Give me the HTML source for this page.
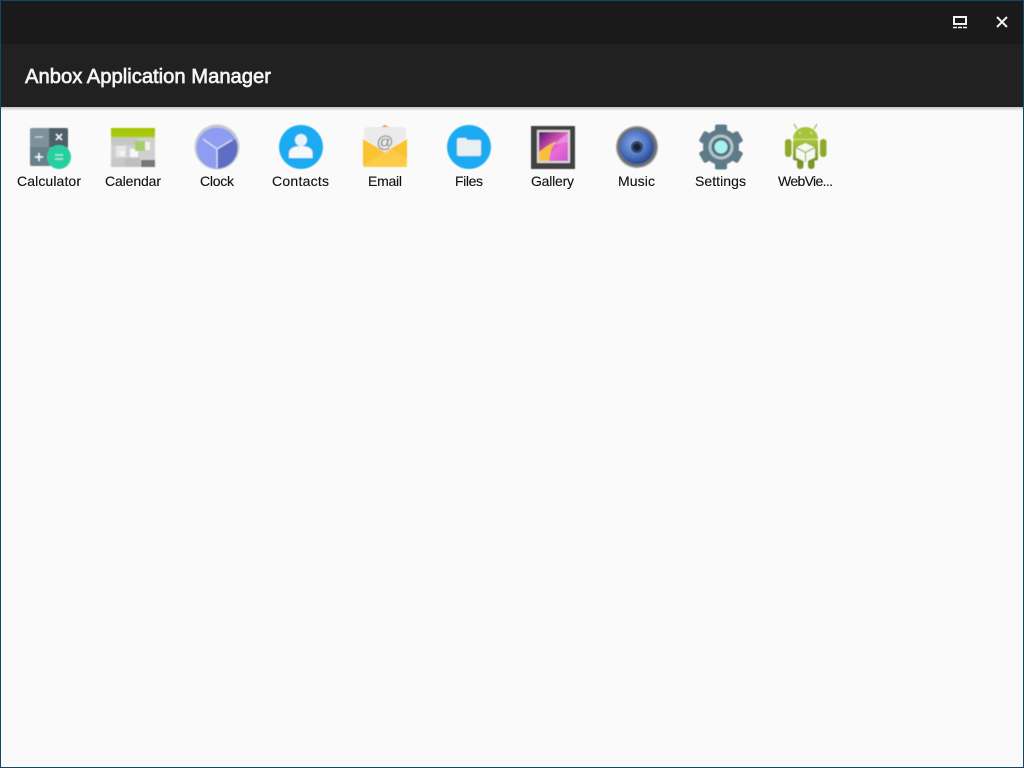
<!DOCTYPE html>
<html>
<head>
<meta charset="utf-8">
<style>
html,body{margin:0;padding:0;width:1024px;height:768px;overflow:hidden;background:#fafafa;}
svg{position:absolute;left:0;top:0;display:block;}
text{font-family:"Liberation Sans",sans-serif;}
.l{font-size:14px;fill:#111;stroke:#111;stroke-width:.12;text-anchor:middle;}
</style>
</head>
<body>
<svg width="1024" height="768" viewBox="0 0 1024 768" xmlns="http://www.w3.org/2000/svg">
<defs>
<linearGradient id="shadow" x1="0" y1="0" x2="0" y2="1"><stop offset="0" stop-color="#c4c4c4"/><stop offset="1" stop-color="#fafafa"/></linearGradient>
<linearGradient id="pic" x1="0" y1="0" x2="1" y2="1"><stop offset="0" stop-color="#4f1a70"/><stop offset=".3" stop-color="#b03f9c"/><stop offset=".6" stop-color="#ec6cd4"/><stop offset="1" stop-color="#c856d0"/></linearGradient>
<radialGradient id="spk" cx=".42" cy=".4" r=".62"><stop offset="0" stop-color="#8aa8e6"/><stop offset=".6" stop-color="#4f76c4"/><stop offset="1" stop-color="#26468e"/></radialGradient>
<linearGradient id="droid" x1="0" y1="0" x2="0" y2="1"><stop offset="0" stop-color="#a9c63c"/><stop offset="1" stop-color="#7a9626"/></linearGradient>
<linearGradient id="green" x1="0" y1="0" x2="0" y2="1"><stop offset="0" stop-color="#a4c400"/><stop offset=".8" stop-color="#a8ca10"/><stop offset="1" stop-color="#c4d68a"/></linearGradient>
<filter id="b" x="-2%" y="-20%" width="104%" height="140%"><feGaussianBlur stdDeviation=".55"/></filter>
</defs>
<rect width="1024" height="768" fill="#fafafa"/>
<rect x="0" y="107" width="1024" height="4" fill="url(#shadow)"/>
<rect width="1024" height="44" fill="#1a1a1a"/>
<rect y="44" width="1024" height="63" fill="#212121"/>
<rect x=".5" y=".5" width="1023" height="767" fill="none" stroke="#0f4a63" stroke-width="1"/>
<text x="25" y="83" font-size="20" fill="#f5f5f5" stroke="#f5f5f5" stroke-width=".65" textLength="246" lengthAdjust="spacingAndGlyphs">Anbox Application Manager</text>
<g fill="none" stroke="#f2f2f2">
<rect x="954" y="17" width="12" height="7" stroke-width="2"/>
<path d="M953 27.500h14" stroke-width="1.400" stroke-dasharray="4 1"/>
<path d="M997 17l10 10M1007 17l-10 10" stroke-width="2"/>
</g>
<g filter="url(#b)">
<!-- calculator -->
<rect x="30" y="128" width="38" height="38" rx="2" fill="#7f929c"/>
<path d="M49 128h17a2 2 0 0 1 2 2v17h-19z" fill="#4f6068"/>
<path d="M30 147h19v19H32a2 2 0 0 1-2-2z" fill="#66808c"/>
<path d="M35 137h8" stroke="#c2ced3" stroke-width="1.500"/>
<path d="M56 134l6 6M62 134l-6 6" stroke="#fff" stroke-width="1.400"/>
<path d="M35 157h8M39 153v8" stroke="#fff" stroke-width="1.400"/>
<circle cx="59" cy="157" r="12" fill="#26cfa0"/>
<path d="M55 155h8M55 159h8" stroke="#a5eed8" stroke-width="1.500"/>
<!-- calendar -->
<rect x="111" y="128" width="44" height="39" fill="#d0d0d0"/>
<rect x="111" y="128" width="44" height="10" fill="url(#green)"/>
<rect x="111" y="138" width="28" height="7" fill="#c6c6c6"/>
<rect x="116" y="146" width="10" height="11" fill="#e6e6e6"/>
<rect x="120" y="151" width="5" height="5" fill="#f4f4f4"/>
<rect x="130" y="149" width="8" height="8" fill="#f8f8f8"/>
<rect x="135" y="141" width="10" height="10" fill="#a4cf6a"/>
<rect x="145" y="142" width="5" height="8" fill="#f2f2f2"/>
<rect x="141" y="160" width="14" height="7" fill="#777"/>
<path d="M125 158h15v9h-15z" fill="#c0c0c0"/>
<path d="M111 158h14v9h-14z" fill="#c8c8c8"/>
<!-- clock -->
<circle cx="217" cy="147" r="22.500" fill="#c6c9d2"/>
<circle cx="217" cy="148" r="20.500" fill="#8e9df2"/>
<path d="M217 149l18.500-10a20.500 20.500 0 0 1-18.500 29.500z" fill="#5f6ec4"/>
<path d="M203 139l14 10 15-9M217 149v19" fill="none" stroke="#d4d9f2" stroke-width="1.500"/>
<!-- contacts -->
<circle cx="301" cy="147" r="22" fill="#1eaaf1"/>
<circle cx="301" cy="140" r="6" fill="#e8f4fb"/>
<path d="M289 158v-5c0-5 6-7 12-7s11.500 2 11.500 7v5z" fill="#f4f8fb"/>
<!-- email -->
<path d="M385 125l6 3h-12z" fill="#f08a24"/>
<path d="M363 139l22 13 22-13v26a2 2 0 0 1-2 2h-40a2 2 0 0 1-2-2z" fill="#fbc232"/>
<path d="M364 131a4 4 0 0 1 4-4h34a4 4 0 0 1 4 4v7l-21 15-21-15z" fill="#ebebeb"/>
<path d="M363 165l28-16 16 9v7a2 2 0 0 1-2 2h-40a2 2 0 0 1-2-2z" fill="#fccc48"/>
<path d="M391 149l16-10v19z" fill="#fbc232"/>
<text x="385" y="147.500" font-size="17" fill="#808080" text-anchor="middle">@</text>
<!-- files -->
<circle cx="469" cy="147" r="22" fill="#1eaaf1"/>
<path d="M457 140a2 2 0 0 1 2-2h7l1.500 2h11.500a2 2 0 0 1 2 2v12a2 2 0 0 1-2 2h-20a2 2 0 0 1-2-2z" fill="#e8eff3"/>
<!-- gallery -->
<rect x="531" y="126" width="44" height="43" fill="#434343"/>
<rect x="537" y="130" width="33" height="33" fill="#d9d9d9"/>
<rect x="539" y="132" width="29" height="29" fill="url(#pic)"/>
<path d="M539 161v-9l8-6 9-5-5 9-2 11z" fill="#f6bf3c"/>
<path d="M568 133l-15 12 15-3z" fill="#e98be0"/>
<!-- music -->
<circle cx="637" cy="147" r="21" fill="#6a6e73"/>
<circle cx="637" cy="147" r="20.300" fill="none" stroke="#a4a6aa" stroke-width="1"/>
<circle cx="637" cy="147" r="17" fill="url(#spk)"/>
<circle cx="637" cy="147" r="6" fill="#33466a"/>
<circle cx="637" cy="147" r="3.500" fill="#18233a"/>
<!-- settings -->
<g transform="translate(721 147)" fill="#5f7a88">
<circle r="18"/>
<rect x="-6" y="-22.500" width="12" height="10" rx="2"/>
<rect x="-6" y="-22.500" width="12" height="10" rx="2" transform="rotate(60)"/>
<rect x="-6" y="-22.500" width="12" height="10" rx="2" transform="rotate(120)"/>
<rect x="-6" y="-22.500" width="12" height="10" rx="2" transform="rotate(180)"/>
<rect x="-6" y="-22.500" width="12" height="10" rx="2" transform="rotate(240)"/>
<rect x="-6" y="-22.500" width="12" height="10" rx="2" transform="rotate(300)"/>
<circle r="12.500" fill="#b3c4cb"/>
<circle r="9.500" fill="#546e7a"/>
<circle r="6.500" fill="#a5f2ee"/>
</g>
<!-- webview -->
<path d="M797 129l-3-5M814 129l3-5" stroke="#a7b86a" stroke-width="1.300"/>
<path d="M793 139a12.500 12 0 0 1 25 0z" fill="#a6c53a"/>
<rect x="793" y="139.500" width="25" height="21" rx="2" fill="url(#droid)"/>
<rect x="785" y="139" width="6.500" height="18" rx="3.200" fill="#8fa92c"/>
<rect x="820" y="139" width="6.500" height="18" rx="3.200" fill="#8fa92c"/>
<rect x="797" y="156" width="6.500" height="13" rx="3" fill="#7a9626"/>
<rect x="808" y="156" width="6.500" height="13" rx="3" fill="#7a9626"/>
<circle cx="800" cy="133" r=".9" fill="#e8f0c0"/>
<circle cx="811" cy="133" r=".9" fill="#e8f0c0"/>
<path d="M805.500 143l9.500 4.500v10l-9.500 4.500-9.500-4.500v-10z" fill="#f7f8ee"/>
<path d="M796 147.500l9.500 5 9.500-5M805.500 152.500v9.500" fill="none" stroke="#93a654" stroke-width="1"/>
</g>
<text class="l" x="49" y="186" textLength="64">Calculator</text>
<text class="l" x="133" y="186" textLength="56">Calendar</text>
<text class="l" x="217" y="186" textLength="34">Clock</text>
<text class="l" x="300.500" y="186" textLength="57">Contacts</text>
<text class="l" x="385" y="186" textLength="34">Email</text>
<text class="l" x="469" y="186" textLength="28">Files</text>
<text class="l" x="552.500" y="186" textLength="43">Gallery</text>
<text class="l" x="636.500" y="186" textLength="37">Music</text>
<text class="l" x="720.500" y="186" textLength="51">Settings</text>
<text class="l" x="805.500" y="186" textLength="55">WebVie...</text>
</svg>
</body>
</html>
